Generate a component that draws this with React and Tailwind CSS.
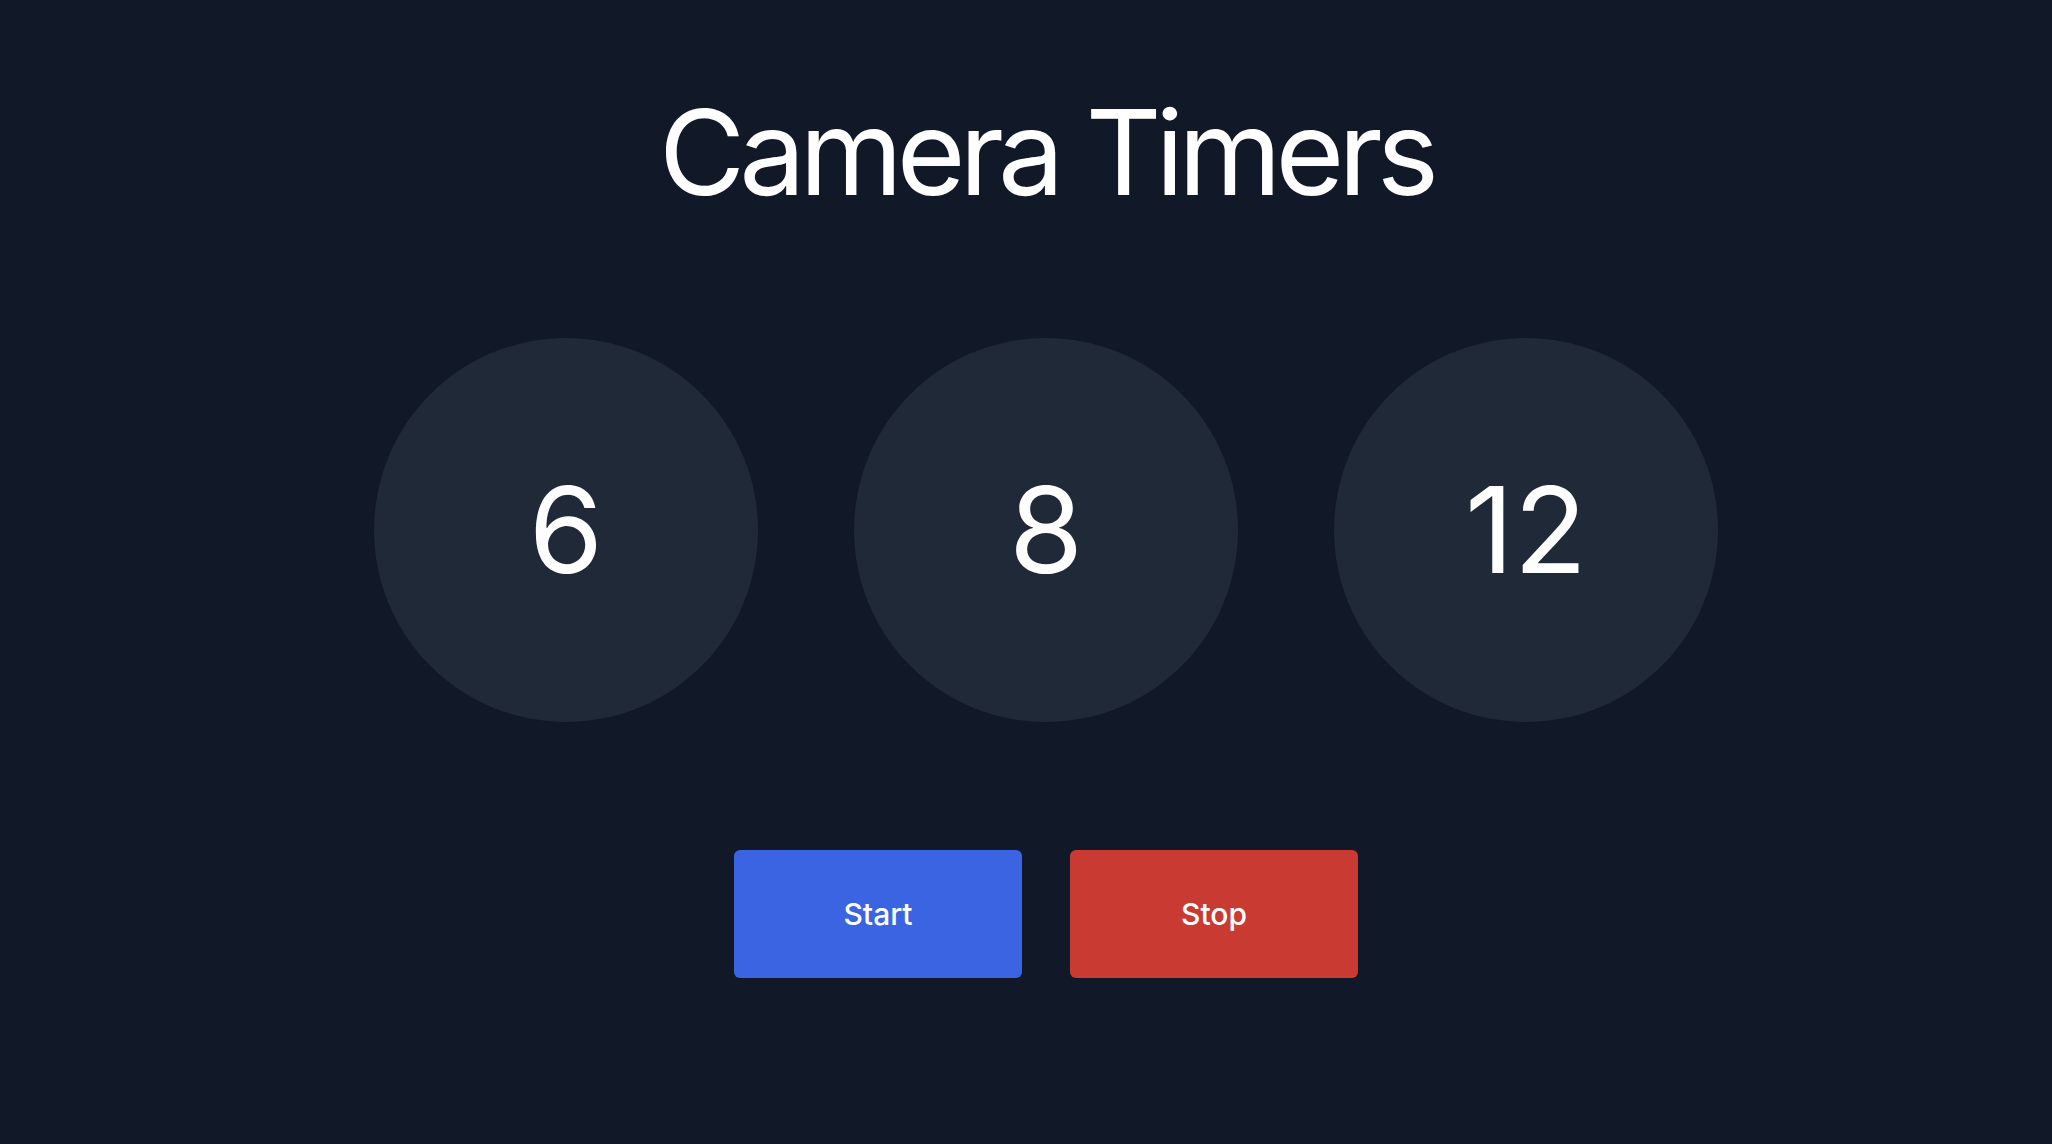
import React from 'react'

const timers = [6, 8, 12]

function TimerCircle({ value }) {
  return (
    <div className="flex h-96 w-96 items-center justify-center rounded-full bg-[#1f2937]">
      <span className="text-[120px] leading-none text-white">{value}</span>
    </div>
  )
}

export default function App() {
  return (
    <div className="min-h-screen w-full bg-[#111827] pl-10 pt-[93px] font-['Inter','Liberation_Sans',sans-serif]">
      <div className="flex flex-col items-center">
        <h1 className="text-[118px] font-normal leading-none tracking-[-6px] text-white">Camera Timers</h1>

        <div className="mt-[127px] flex gap-24">
          {timers.map((t) => (
            <TimerCircle key={t} value={t} />
          ))}
        </div>

        <div className="mt-32 flex gap-12">
          <button className="h-32 w-72 rounded-md bg-[#3a64e2] text-3xl font-medium text-white">Start</button>
          <button className="h-32 w-72 rounded-md bg-[#c93a32] text-3xl font-medium text-white">Stop</button>
        </div>
      </div>
    </div>
  )
}
